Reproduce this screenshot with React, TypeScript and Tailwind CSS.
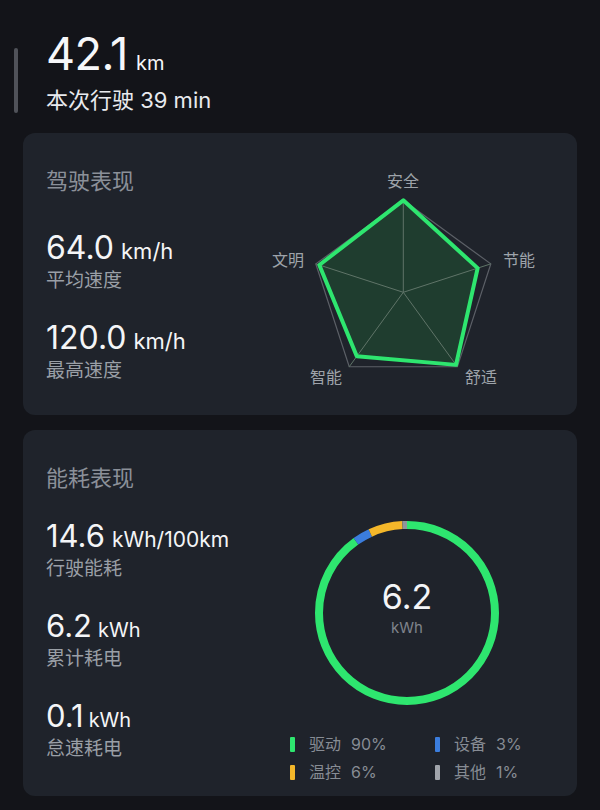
import React from "react";

const C = { x: 132.3, y: 159.3 };
const R = 92;
const angles = [-90, -18, 54, 126, 198].map((a) => (a * Math.PI) / 180);
const vals = [1.0, 0.85, 0.975, 0.86, 0.96];

function pt(i: number, v: number) {
  return [C.x + Math.cos(angles[i]) * R * v, C.y + Math.sin(angles[i]) * R * v];
}

function Radar() {
  const outer = angles.map((_, i) => pt(i, 1).join(",")).join(" ");
  const data = angles.map((_, i) => pt(i, vals[i]).join(",")).join(" ");
  const labels = [
    { t: "安全", x: 132, y: 48 },
    { t: "节能", x: 248, y: 127 },
    { t: "舒适", x: 210, y: 244 },
    { t: "智能", x: 55, y: 244 },
    { t: "文明", x: 17, y: 127 },
  ];
  return (
    <svg width="290" height="282" viewBox="0 0 290 282" className="ml-auto mr-[16px] shrink-0">
      <polygon points={outer} fill="none" stroke="#5c6067" strokeWidth="1.2" />
      <polygon points={data} fill="#1f3d2f" stroke="none" />
      {angles.map((_, i) => {
        const [x, y] = pt(i, 1);
        return <line key={i} x1={C.x} y1={C.y} x2={x} y2={y} stroke="#5f7468" strokeWidth="1" />;
      })}
      <polygon points={data} fill="none" stroke="#2ee66f" strokeWidth="4" strokeLinejoin="round" />
      {labels.map((l) => (
        <text
          key={l.t}
          x={l.x}
          y={l.y}
          textAnchor="middle"
          dominantBaseline="central"
          fontSize="16"
          fill="#9ea3aa"
        >
          {l.t}
        </text>
      ))}
    </svg>
  );
}

function Donut() {
  const r = 88;
  const circ = 2 * Math.PI * r;
  const segs = [
    { p: 0.9, c: "#2ee66f" },
    { p: 0.03, c: "#3b7ddd" },
    { p: 0.06, c: "#f4b72a" },
    { p: 0.01, c: "#8f949c" },
  ];
  let acc = 0;
  return (
    <div className="relative w-[192px] h-[192px] mx-auto">
      <svg width="192" height="192" viewBox="0 0 192 192">
        <g transform="rotate(-90 96 96)">
          {segs.map((s, i) => {
            const len = s.p * circ;
            const el = (
              <circle
                key={i}
                cx="96"
                cy="96"
                r={r}
                fill="none"
                stroke={s.c}
                strokeWidth="8"
                strokeDasharray={`${len} ${circ - len}`}
                strokeDashoffset={-acc}
              />
            );
            acc += len;
            return el;
          })}
        </g>
      </svg>
      <div className="absolute inset-0 flex flex-col items-center justify-center pb-[10px]">
        <div className="text-[34px] leading-[34px] text-[#f4f5f7]">6.2</div>
        <div className="text-[15px] leading-[16px] mt-[6px] text-[#7f848c]">kWh</div>
      </div>
    </div>
  );
}

function Stat({ num, unit, label, size, unitSize, unitGap }: { num: string; unit: string; label: string; size: string; unitSize: string; unitGap: string }) {
  return (
    <div>
      <div className={`${size} leading-[40px] text-[#f4f5f7] whitespace-nowrap`}>
        {num}
        <span className={`${unitSize} leading-none ${unitGap}`}>{unit}</span>
      </div>
      <div className="text-[19px] leading-[26px] text-[#9a9fa6]">{label}</div>
    </div>
  );
}

function Legend({ color, name, pct }: { color: string; name: string; pct: string }) {
  return (
    <div className="flex items-center h-[20px] text-[16px] leading-[20px] text-[#878c94]">
      <span className={`w-[5px] h-[15px] rounded-[1px] ${color}`} />
      <span className="ml-[14px]">{name}</span>
      <span className="ml-[10px]">{pct}</span>
    </div>
  );
}

export default function App() {
  return (
    <div className="w-[600px] h-[810px] overflow-hidden bg-[#131419] font-['Inter','Noto_Sans_CJK_SC',sans-serif]">
      <div className="flex items-start pl-[14px] pt-[31px]">
        <div className="w-[4px] h-[65px] mt-[17px] rounded-full bg-[#505259]" />
        <div className="ml-[28px]">
          <div className="text-[45px] leading-[46px] text-[#f6f7f9] whitespace-nowrap tracking-[-0.5px]">
            42.1<span className="text-[20px] leading-none ml-[8px] tracking-normal">km</span>
          </div>
          <div className="mt-[9px] text-[22px] leading-[28px] text-[#e8eaee]">本次行驶 39 min</div>
        </div>
      </div>

      <div className="mx-[23px] mt-[19px] h-[282px] rounded-[12px] bg-[#1f232b] flex">
        <div className="pl-[23px] pt-[33px]">
          <div className="text-[22px] leading-[30px] text-[#8b9099]">驾驶表现</div>
          <div className="mt-[32px]">
            <Stat num="64.0" unit="km/h" label="平均速度" size="text-[32px]" unitSize="text-[22px]" unitGap="ml-[7px]" />
          </div>
          <div className="mt-[24px]">
            <Stat num="120.0" unit="km/h" label="最高速度" size="text-[32px]" unitSize="text-[22px]" unitGap="ml-[7px]" />
          </div>
        </div>
        <Radar />
      </div>

      <div className="mx-[23px] mt-[15px] h-[366px] rounded-[12px] bg-[#1f232b] flex">
        <div className="pl-[23px] pt-[33px] flex-1">
          <div className="text-[22px] leading-[30px] text-[#8b9099]">能耗表现</div>
          <div className="mt-[23px]">
            <Stat num="14.6" unit="kWh/100km" label="行驶能耗" size="text-[31px]" unitSize="text-[21px]" unitGap="ml-[7px]" />
          </div>
          <div className="mt-[24px]">
            <Stat num="6.2" unit="kWh" label="累计耗电" size="text-[31px]" unitSize="text-[20px]" unitGap="ml-[6px]" />
          </div>
          <div className="mt-[24px]">
            <Stat num="0.1" unit="kWh" label="怠速耗电" size="text-[31px]" unitSize="text-[20px]" unitGap="ml-[5px]" />
          </div>
        </div>
        <div className="w-[234px] mr-[53px] pt-[87px] shrink-0">
          <Donut />
          <div className="mt-[25px] grid grid-cols-[145px_89px] gap-y-[8px]">
            <Legend color="bg-[#2ee66f]" name="驱动" pct="90%" />
            <Legend color="bg-[#3b7ddd]" name="设备" pct="3%" />
            <Legend color="bg-[#f4b72a]" name="温控" pct="6%" />
            <Legend color="bg-[#a0a4ab]" name="其他" pct="1%" />
          </div>
        </div>
      </div>
    </div>
  );
}
